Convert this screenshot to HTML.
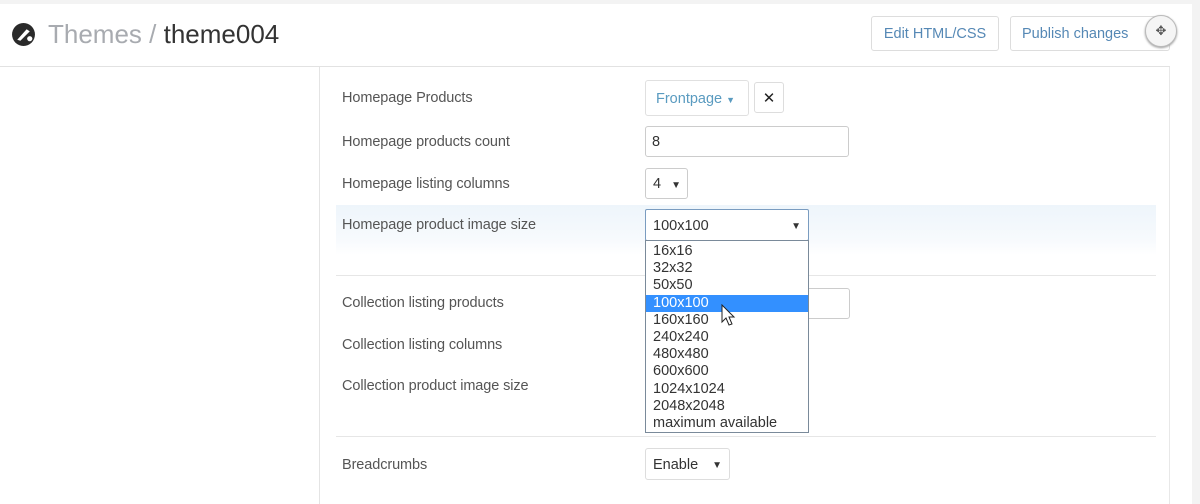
<!DOCTYPE html>
<html><head><meta charset="utf-8"><style>
*{box-sizing:border-box;margin:0;padding:0}
body{width:1200px;height:504px;background:#fff;font-family:"Liberation Sans",Arial,sans-serif;position:relative;overflow:hidden;color:#444}
.a{position:absolute}
.lbl{position:absolute;left:342px;font-size:14.5px;color:#555;letter-spacing:-0.1px}
.box{position:absolute;border:1px solid #ccc;border-radius:3px;background:#fff;font-size:14.5px;color:#333}
.opt{height:17.2px;line-height:17px;padding-left:7px;font-size:14.5px;color:#333}
</style></head><body>
<div class="a" style="left:0;top:0;width:1200px;height:4px;background:#f3f3f3"></div>
<div class="a" style="left:0;top:66px;width:1170px;height:1px;background:#e2e2e2"></div>
<div class="a" style="left:1192px;top:0;width:8px;height:504px;background:#f3f3f3"></div>
<div class="a" style="left:319px;top:67px;width:1px;height:437px;background:#e4e4e4"></div>
<div class="a" style="left:1169px;top:67px;width:1px;height:437px;background:#e8e8e8"></div>
<svg class="a" style="left:11px;top:22px" width="25" height="25" viewBox="0 0 24 24"><circle cx="12" cy="12" r="11" fill="#2a2a2a"/><path d="M6 17 L15 7 L18 9 L9 18 Z" fill="#fff"/><circle cx="18" cy="16" r="2.5" fill="#fff"/></svg>
<div class="a" style="left:48px;top:19px;font-size:26px;color:#a8abb0">Themes / <span style="color:#333">theme004</span></div>
<div class="box" style="left:871px;top:16px;width:128px;height:35px;color:#5588b5;line-height:35px;text-align:center;font-size:14.5px;border-color:#ddd">Edit HTML/CSS</div>
<div class="box" style="left:1010px;top:16px;width:160px;height:35px;color:#5588b5;line-height:35px;padding-left:11px;font-size:14.5px;border-color:#ddd">Publish changes</div>
<div class="a" style="left:1145px;top:15px;width:32px;height:32px;border-radius:50%;background:#f5f5f5;border:1px solid #bbb;box-shadow:0 1px 2px #999;text-align:center;line-height:30px;font-size:13px;color:#555">✥</div>
<div class="a" style="left:336px;top:205px;width:820px;height:50px;background:linear-gradient(#eef5fb,#f7fafd 70%,#fff)"></div>
<div class="a" style="left:336px;top:275px;width:820px;height:1px;background:#e6e6e6"></div>
<div class="a" style="left:336px;top:436px;width:820px;height:1px;background:#e6e6e6"></div>
<div class="lbl" style="top:90px">Homepage Products</div>
<div class="lbl" style="top:134px">Homepage products count</div>
<div class="lbl" style="top:176px">Homepage listing columns</div>
<div class="lbl" style="top:217px">Homepage product image size</div>
<div class="lbl" style="top:295px">Collection listing products</div>
<div class="lbl" style="top:337px">Collection listing columns</div>
<div class="lbl" style="top:378px">Collection product image size</div>
<div class="lbl" style="top:457px">Breadcrumbs</div>
<div class="box" style="left:645px;top:80px;width:104px;height:36px;color:#5a9bc0;line-height:36px;padding-left:10px;border-color:#e0e0e0">Frontpage <span style="font-size:9px">▼</span></div>
<div class="box" style="left:754px;top:82px;width:30px;height:31px;line-height:31px;text-align:center;font-size:15px;color:#222;border-color:#ddd">✕</div>
<div class="box" style="left:645px;top:126px;width:204px;height:31px;line-height:31px;padding-left:6px">8</div>
<div class="box" style="left:645px;top:168px;width:43px;height:31px;line-height:31px;padding-left:7px">4 <span style="font-size:10px;margin-left:6px">▼</span></div>
<div class="box" style="left:780px;top:288px;width:70px;height:31px"></div>
<div class="box" style="left:645px;top:209px;width:164px;height:32px;border-color:#7a9cc0;border-radius:2px;line-height:33px;padding-left:7px">100x100<span style="position:absolute;right:7px;font-size:10px">▼</span></div>
<div class="a" style="left:645px;top:240px;width:164px;height:193px;border:1px solid #7a8a9a;background:#fff;padding-top:2px">
<div class="opt">16x16</div><div class="opt">32x32</div><div class="opt">50x50</div>
<div class="opt" style="background:#3390ff;color:#fff">100x100</div>
<div class="opt">160x160</div><div class="opt">240x240</div><div class="opt">480x480</div><div class="opt">600x600</div><div class="opt">1024x1024</div><div class="opt">2048x2048</div><div class="opt">maximum available</div>
</div>
<svg class="a" style="left:721px;top:304px" width="16" height="24" viewBox="0 0 16 24"><path d="M1 1 L1 18 L5 14 L8 21 L11 20 L8 13 L13 13 Z" fill="#fff" stroke="#222" stroke-width="1"/></svg>
<div class="box" style="left:645px;top:448px;width:85px;height:32px;line-height:33px;padding-left:7px;border-color:#ddd">Enable<span style="position:absolute;right:7px;font-size:10px">▼</span></div>
</body></html>
